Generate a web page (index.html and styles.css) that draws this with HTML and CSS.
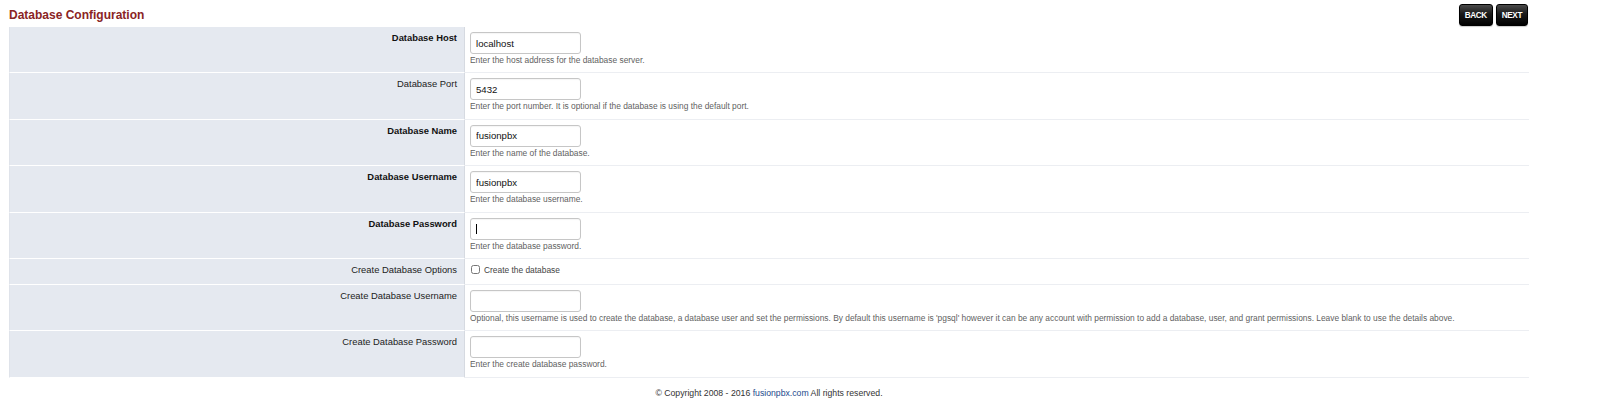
FILE: index.html
```html
<!DOCTYPE html>
<html>
<head>
<meta charset="utf-8">
<title>Database Configuration</title>
<link rel="stylesheet" href="styles.css">
</head>
<body>
<div class="page">
  <div class="header">
    <div class="title">Database Configuration</div>
    <div class="actions">
      <button class="btn" type="button">BACK</button>
      <button class="btn" type="button">NEXT</button>
    </div>
  </div>
  <table class="form">
    <tr>
      <td class="vncell req">Database Host</td>
      <td class="vtable"><input class="formfld" type="text" value="localhost"><div class="desc">Enter the host address for the database server.</div></td>
    </tr>
    <tr>
      <td class="vncell">Database Port</td>
      <td class="vtable"><input class="formfld" type="text" value="5432"><div class="desc">Enter the port number. It is optional if the database is using the default port.</div></td>
    </tr>
    <tr>
      <td class="vncell req">Database Name</td>
      <td class="vtable"><input class="formfld" type="text" value="fusionpbx"><div class="desc">Enter the name of the database.</div></td>
    </tr>
    <tr>
      <td class="vncell req">Database Username</td>
      <td class="vtable"><input class="formfld" type="text" value="fusionpbx"><div class="desc">Enter the database username.</div></td>
    </tr>
    <tr>
      <td class="vncell req">Database Password</td>
      <td class="vtable"><span class="fieldwrap"><input class="formfld" type="password" value=""><span class="caret"></span></span><div class="desc">Enter the database password.</div></td>
    </tr>
    <tr class="short">
      <td class="vncell">Create Database Options</td>
      <td class="vtable"><label class="check"><input type="checkbox" class="cb"> Create the database</label></td>
    </tr>
    <tr>
      <td class="vncell">Create Database Username</td>
      <td class="vtable"><input class="formfld" type="text" value=""><div class="desc">Optional, this username is used to create the database, a database user and set the permissions. By default this username is 'pgsql' however it can be any account with permission to add a database, user, and grant permissions. Leave blank to use the details above.</div></td>
    </tr>
    <tr>
      <td class="vncell">Create Database Password</td>
      <td class="vtable"><input class="formfld" type="password" value=""><div class="desc">Enter the create database password.</div></td>
    </tr>
  </table>
  <div class="footer">© Copyright 2008 - 2016 <a href="#">fusionpbx.com</a> All rights reserved.</div>
</div>
</body>
</html>
```
FILE: styles.css
```css
html, body {
  margin: 0;
  padding: 0;
  background: #fff;
}
body {
  font-family: "Liberation Sans", Arial, sans-serif;
  color: #222;
}
.page {
  width: 1520px;
  margin-left: 9px;
}
.header {
  display: flex;
  justify-content: space-between;
  align-items: center;
  height: 22px;
  margin-top: 4px;
}
.title {
  color: #8a2424;
  font-weight: bold;
  font-size: 12px;
  line-height: 14px;
}
.actions {
  display: flex;
  gap: 3px;
  margin-right: 1px;
}
.btn {
  height: 22px;
  padding: 0 5px;
  margin: 0;
  border: 1px solid #000;
  border-radius: 3px;
  background: linear-gradient(to bottom, #4a4a4a 0%, #1a1a1a 45%, #000 100%);
  color: #fff;
  font-family: "Liberation Sans", Arial, sans-serif;
  font-weight: bold;
  font-size: 8.2px;
  letter-spacing: -0.4px;
  box-shadow: 0 1px 1px rgba(0,0,0,0.2);
}
.form {
  width: 1520px;
  margin-top: 1px;
  border-collapse: separate;
  border-spacing: 0;
}
.vncell {
  width: 30%;
  box-sizing: border-box;
  background: #e5e9f0;
  border-bottom: 1px solid #fff;
  border-right: 1px solid #d6dae1;
  border-left: 1px solid #dfe3ea;
  padding: 5px 7px 6.4px 8px;
  text-align: right;
  vertical-align: top;
  font-size: 9.4px;
  line-height: 12px;
  color: #222;
}
.vncell.req {
  font-weight: bold;
  color: #111;
}
.vtable {
  background: #fff;
  border-bottom: 1px solid #eceef2;
  padding: 5px 8px 6.4px 5px;
  vertical-align: top;
  text-align: left;
}
.short .vncell,
.short .vtable {
  padding-bottom: 8px;
}
.formfld {
  display: block;
  box-sizing: border-box;
  width: 111px;
  height: 22px;
  margin: 0;
  padding: 0 5px;
  border: 1px solid #c6c6c6;
  border-radius: 3px;
  background: #fff;
  font-family: "Liberation Sans", Arial, sans-serif;
  font-size: 9.6px;
  color: #111;
  box-shadow: inset 0 1px 1px rgba(0,0,0,0.04);
}
.fieldwrap {
  position: relative;
  display: block;
  width: 111px;
}
.caret {
  position: absolute;
  left: 6px;
  top: 6px;
  width: 1px;
  height: 10px;
  background: #000;
}
.desc {
  font-size: 8.4px;
  line-height: 12px;
  color: #5f5f5f;
}
.check {
  display: flex;
  align-items: center;
  font-size: 8.4px;
  line-height: 12px;
  color: #444;
}
.cb {
  width: 9px;
  height: 9px;
  margin: 0 4px 0 1px;
}
.footer {
  margin-top: 9px;
  text-align: center;
  font-size: 8.7px;
  line-height: 12px;
  color: #333;
}
.footer a {
  color: #1d4a8c;
  text-decoration: none;
}
```
